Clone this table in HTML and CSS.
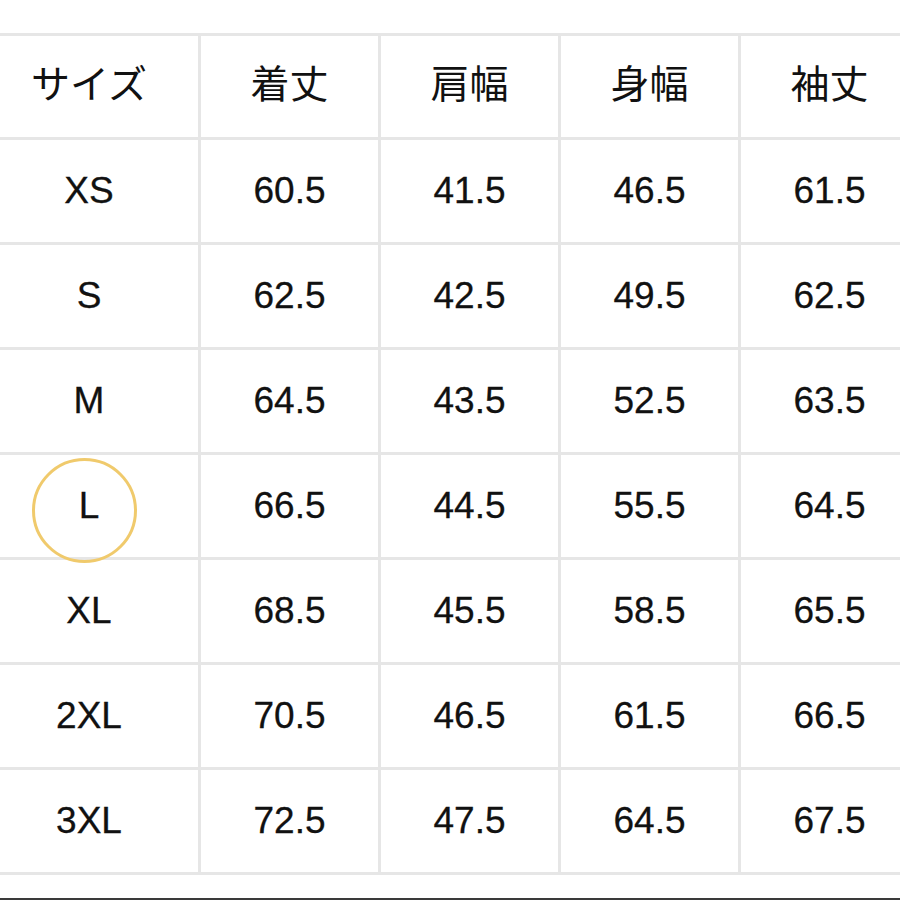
FILE: index.html
```html
<!DOCTYPE html>
<html lang="ja">
<head>
<meta charset="utf-8">
<link rel="stylesheet" href="styles.css">
</head>
<body>
<div class="page">
  <div class="grid">
    <div class="cell head">サイズ</div>
    <div class="cell head">着丈</div>
    <div class="cell head">肩幅</div>
    <div class="cell head">身幅</div>
    <div class="cell head">袖丈</div>

    <div class="cell">XS</div><div class="cell">60.5</div><div class="cell">41.5</div><div class="cell">46.5</div><div class="cell">61.5</div>
    <div class="cell">S</div><div class="cell">62.5</div><div class="cell">42.5</div><div class="cell">49.5</div><div class="cell">62.5</div>
    <div class="cell">M</div><div class="cell">64.5</div><div class="cell">43.5</div><div class="cell">52.5</div><div class="cell">63.5</div>
    <div class="cell marked">L<span class="ring"></span></div><div class="cell">66.5</div><div class="cell">44.5</div><div class="cell">55.5</div><div class="cell">64.5</div>
    <div class="cell">XL</div><div class="cell">68.5</div><div class="cell">45.5</div><div class="cell">58.5</div><div class="cell">65.5</div>
    <div class="cell">2XL</div><div class="cell">70.5</div><div class="cell">46.5</div><div class="cell">61.5</div><div class="cell">66.5</div>
    <div class="cell">3XL</div><div class="cell">72.5</div><div class="cell">47.5</div><div class="cell">64.5</div><div class="cell">67.5</div>
  </div>
  <div class="bottom-bar"></div>
</div>
</body>
</html>
```
FILE: styles.css
```css
html, body {
  margin: 0;
  padding: 0;
  background: #ffffff;
  overflow: hidden;
}

.page {
  width: 900px;
  height: 900px;
  padding-top: 33px;
  box-sizing: border-box;
  overflow: hidden;
  font-family: "Liberation Sans", "Noto Sans CJK JP", sans-serif;
  color: #111111;
}

.grid {
  display: grid;
  grid-template-columns: 218px repeat(4, 177px);
  grid-template-rows: 100.5px repeat(7, 102px);
  gap: 3px;
  padding: 3px 0;
  margin-left: -20px;
  width: 938px;
  background: #e6e6e6;
}

.cell {
  background: #ffffff;
  display: flex;
  align-items: center;
  justify-content: center;
  font-size: 37px;
  line-height: 1;
  -webkit-text-stroke: 0.3px #111111;
}

.cell.head {
  font-size: 39px;
  padding-bottom: 4px;
  box-sizing: border-box;
  -webkit-text-stroke: 0;
}

.cell.marked {
  position: relative;
}

.ring {
  position: absolute;
  left: 52px;
  top: 3px;
  width: 99px;
  height: 99px;
  border: 3px solid #f0ca6c;
  border-radius: 50%;
}

.bottom-bar {
  margin-top: 23px;
  height: 3px;
  background: #3a3a3a;
}
```
